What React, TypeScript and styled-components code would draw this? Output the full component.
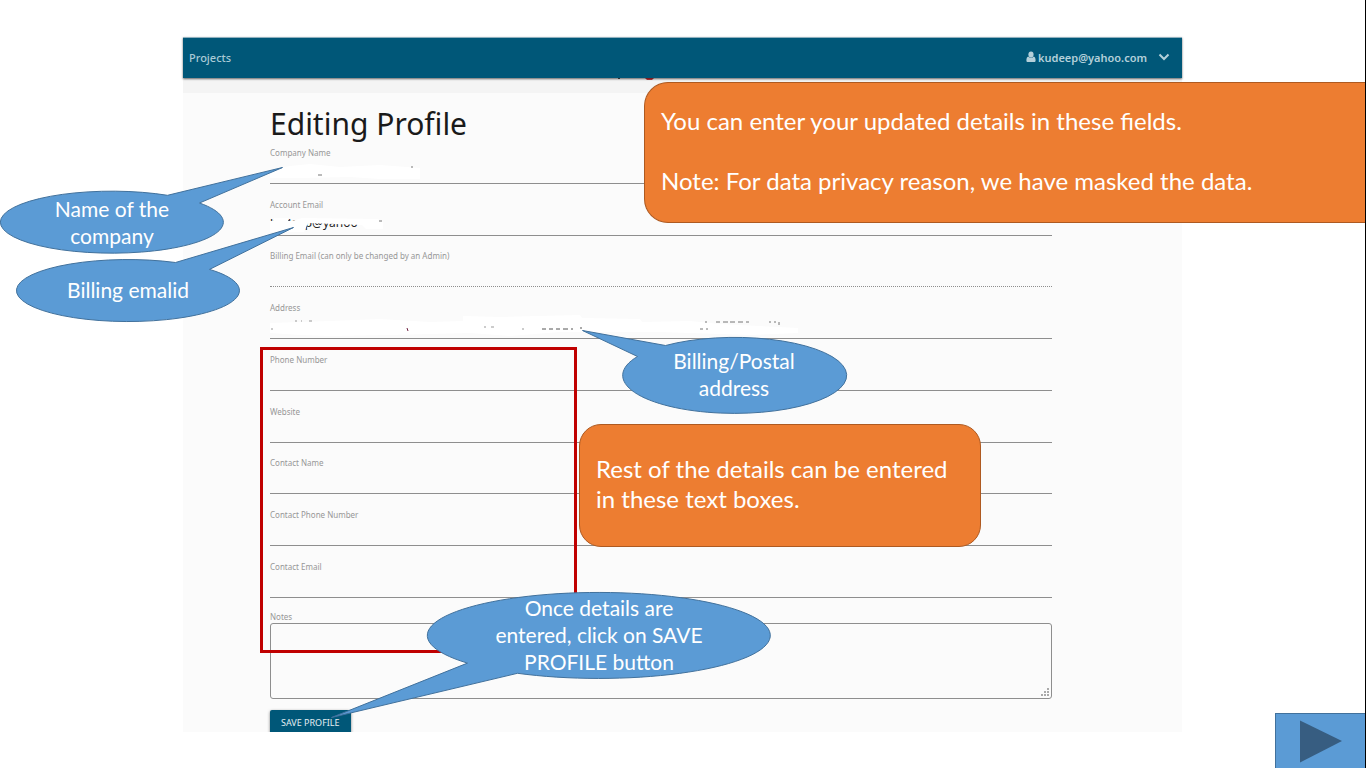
import React from "react";
import styled, { createGlobalStyle } from "styled-components";

const uiFont = `"Noto Sans", "Open Sans", sans-serif`;
const noteFont = `Lato, "Open Sans", sans-serif`;

const GlobalStyle = createGlobalStyle`
  *, *::before, *::after { box-sizing: border-box; }
  body { margin: 0; background: #fff; font-family: ${uiFont}; }
`;

const Slide = styled.div`
  position: relative;
  min-height: 100vh;
  padding: 37px 183px 36px;
  border-right: 1px solid #000;
  overflow: hidden;
`;

const Page = styled.main`
  background: #fbfbfb;
`;

const TopBar = styled.nav`
  position: relative;
  display: flex;
  align-items: center;
  justify-content: space-between;
  height: 41px;
  padding: 0 12px 2px 6px;
  background: #005778;
  border-top: 1px solid #8fb0be;
  box-shadow: 0 1px 2px rgba(0, 0, 0, 0.6);
  font-size: 11px;
  font-weight: 500;
`;

const NavLink = styled.a`
  color: #a9cad6;
  text-decoration: none;
`;

const AccountButton = styled.button`
  display: flex;
  align-items: center;
  gap: 2px;
  padding: 0;
  border: 0;
  background: none;
  color: #b4d0da;
  font: inherit;
  font-weight: 600;

  svg:last-child { margin-left: 9px; }
`;

const SubBar = styled.div`
  display: flex;
  justify-content: center;
  height: 15px;
  background: #f4f4f4;
`;

const Form = styled.form`
  display: flex;
  flex-direction: column;
  height: 639px;
  padding: 10px 130px 0 87px;
  overflow: hidden;
`;

const Title = styled.h1`
  margin: 0;
  color: #1a1a1a;
  font-size: 30px;
  font-weight: 400;
  line-height: 41px;
`;

const Fields = styled.div`
  display: grid;
  flex: none;
  grid-template-rows: repeat(9, 1fr);
  height: 466px;
  margin-top: -12px;
`;

const Field = styled.div`
  position: relative;
  display: flex;
  flex-direction: column;
  justify-content: flex-end;
`;

const Label = styled.label`
  color: #979797;
  font-size: 8px;
  line-height: 12px;
`;

const Input = styled.input<{ $dotted?: boolean }>`
  width: 100%;
  height: 25px;
  padding: 0;
  border: 0;
  border-bottom: 1px ${(p) => (p.$dotted ? "dotted" : "solid")} #8e8e8e;
  outline: 0;
  background: transparent;
  color: #222;
  font: 12px ${uiFont};
`;

const Mask = styled.svg`
  position: absolute;
  left: 0;
  bottom: 0;
  overflow: visible;
`;

const NotesField = styled.div`
  display: flex;
  flex: none;
  flex-direction: column;
  margin-top: 13px;
`;

const NotesBox = styled.div`
  position: relative;
  display: flex;
`;

const TextArea = styled.textarea`
  flex: 1;
  height: 76px;
  border: 1px solid #8e8e8e;
  border-radius: 3px;
  outline: 0;
  background: transparent;
  resize: none;
`;

const Grip = styled.svg`
  position: absolute;
  right: 3px;
  bottom: 2px;
`;

const SaveButton = styled.button`
  flex: none;
  align-self: flex-start;
  height: 27px;
  margin-top: 11px;
  padding: 0 11px 2px;
  border: 0;
  border-radius: 2px;
  background: #005778;
  box-shadow: 0 1px 3px rgba(0, 0, 0, 0.5);
  color: #e4eef2;
  font: 9px ${uiFont};
`;

const RedFrame = styled.div`
  position: absolute;
  left: 260px;
  top: 347px;
  width: 317px;
  height: 306px;
  border: 3px solid #c00000;
  pointer-events: none;
`;

const Note = styled.aside<{ $x: number; $y: number; $h: number; $w?: number }>`
  position: absolute;
  left: ${(p) => p.$x}px;
  top: ${(p) => p.$y}px;
  ${(p) => (p.$w ? `width: ${p.$w}px;` : "right: 0;")}
  height: ${(p) => p.$h}px;
  display: flex;
  flex-direction: column;
  justify-content: center;
  padding: 0 16px 4px;
  border: 1px solid #ae5a21;
  border-right-width: ${(p) => (p.$w ? 1 : 0)}px;
  border-radius: ${(p) => (p.$w ? "22px" : "24px 0 0 24px")};
  background: #ed7d31;
  color: #fff;
  font-family: ${noteFont};
  font-size: 24px;
  line-height: 30px;

  p { margin: 0; white-space: pre-line; }
`;

const Balloons = styled.svg`
  position: absolute;
  left: 0;
  top: 0;
  pointer-events: none;

  path { fill: #5b9bd5; stroke: #41719c; stroke-width: 1; }
`;

const BalloonText = styled.p<{ $x: number; $y: number; $w: number; $h: number }>`
  position: absolute;
  left: ${(p) => p.$x}px;
  top: ${(p) => p.$y}px;
  width: ${(p) => p.$w}px;
  height: ${(p) => p.$h}px;
  display: flex;
  align-items: center;
  justify-content: center;
  margin: 0;
  padding-bottom: 3px;
  color: #fff;
  font-family: ${noteFont};
  font-size: 21px;
  line-height: 27px;
  text-align: center;
  white-space: pre-line;
`;

const NextButton = styled.button`
  position: absolute;
  right: 0;
  bottom: 0;
  width: 90px;
  height: 55px;
  padding: 0;
  border: 1px solid #41719c;
  border-width: 1px 0 0 1px;
  background: #5b9bd5;

  svg { display: block; }
`;

const companyMask = (
  <Mask width="160" height="22" aria-hidden="true">
    <path d="M0 8 L20 4 L40 2 L70 5 L110 3 L150 6 V17 H110 L80 15 L30 16 L0 16Z" fill="#fff" />
    <path d="M48 13h4M141 5h2" stroke="#777" />
  </Mask>
);

const emailMask = (
  <Mask width="120" height="22" aria-hidden="true">
    <path d="M0 0H90V5H0Z" fill="#fbfbfb" />
    <path d="M0 7H4V4H18V7H22L32 4L108 5L113 8V15H96L92 11L38 9L34 18H0Z" fill="#fff" />
    <path d="M109 7h3" stroke="#777" />
  </Mask>
);

const addressMask = (
  <Mask width="530" height="26" aria-hidden="true">
    <path
      d="M0 10 L60 8 L110 6 L160 9 L193 8 V3 L230 4 L310 2 L312 5 L370 6 L372 9 L420 8 L450 11 L528 15 V20 L480 22 L390 19 L290 19 L240 23 L200 20 L120 22 L60 23 L30 22 L0 20Z"
      fill="#fff"
    />
    <path d="M25 8h2M31 8h1M39 8h3M1 16h2M214 14h2M221 14h3M252 16h2" stroke="#999" />
    <path d="M137 15l1 3" stroke="#702040" />
    <path d="M272 16h4M279 16h4M286 16h4M293 16h5M301 16h2M311 16v-2" stroke="#555" strokeWidth="1" />
    <path d="M435 9h2M446 9h4M453 9h5M460 9h5M468 9h5M476 9h3M499 9h2M504 9h2M509 9v3M430 16h3M436 16h2" stroke="#777" />
  </Mask>
);

interface FieldSpec {
  id: string;
  label: string;
  value?: string;
  dotted?: boolean;
  mask?: React.ReactNode;
}

const fields: FieldSpec[] = [
  { id: "company", label: "Company Name", mask: companyMask },
  { id: "email", label: "Account Email", value: "kudeep@yahoo", mask: emailMask },
  { id: "billing", label: "Billing Email (can only be changed by an Admin)", dotted: true },
  { id: "address", label: "Address", mask: addressMask },
  { id: "phone", label: "Phone Number" },
  { id: "website", label: "Website" },
  { id: "contact", label: "Contact Name" },
  { id: "contact-phone", label: "Contact Phone Number" },
  { id: "contact-email", label: "Contact Email" },
];

export default function App() {
  return (
    <Slide>
      <GlobalStyle />
      <Page>
        <TopBar>
          <NavLink href="#projects">Projects</NavLink>
          <AccountButton type="button">
            <svg width="10" height="12" viewBox="0 0 10 12" fill="currentColor" aria-hidden="true">
              <ellipse cx="5" cy="3.6" rx="2.6" ry="3" />
              <path d="M2.3 5.6C1 6 .4 7.500 .4 9.500C.4 10.600 1 11 1.800 11H8.200C9 11 9.600 10.600 9.600 9.500C9.600 7.500 9 6 7.700 5.600C6.500 7.200 3.500 7.200 2.300 5.600Z" />
            </svg>
            kudeep@yahoo.com
            <svg width="12" height="8" viewBox="0 0 12 8" fill="none" stroke="currentColor" strokeWidth="2" aria-hidden="true">
              <path d="M1.500 1.500L6 6L10.500 1.500" />
            </svg>
          </AccountButton>
        </TopBar>
        <SubBar>
          <svg width="200" height="4" aria-hidden="true">
            <path d="M36 0v1" stroke="#555" strokeWidth="2" />
            <path d="M62 0h9l-2 2h-5z" fill="#c9343c" />
          </svg>
        </SubBar>
        <Form>
          <Title>Editing Profile</Title>
          <Fields>
            {fields.map((f) => (
              <Field key={f.id}>
                <Label htmlFor={f.id}>{f.label}</Label>
                <Input id={f.id} defaultValue={f.value} $dotted={f.dotted} readOnly={f.dotted} />
                {f.mask}
              </Field>
            ))}
          </Fields>
          <NotesField>
            <Label htmlFor="notes">Notes</Label>
            <NotesBox>
              <TextArea id="notes" />
              <Grip width="9" height="9" fill="#aaa" aria-hidden="true">
                <path d="M7 0h2v2h-2zM7 3h2v2h-2zM4 3h2v2h-2zM7 6h2v2h-2zM4 6h2v2h-2zM1 6h2v2h-2z" />
              </Grip>
            </NotesBox>
          </NotesField>
          <SaveButton type="button">SAVE PROFILE</SaveButton>
        </Form>
      </Page>

      <RedFrame />
      <Note $x={644} $y={82} $h={141}>
        <p>{"You can enter your updated details in these fields.\n\nNote: For data privacy reason, we have masked the data."}</p>
      </Note>
      <Note $x={579} $y={424} $w={402} $h={123}>
        <p>{"Rest of the details can be entered\nin these text boxes."}</p>
      </Note>

      <Balloons width="860" height="730" aria-hidden="true">
        <path d="M167.500 195.300L282.500 167.500L199.500 203A111.500 31 0 1 1 167.500 195.300Z" />
        <path d="M175.500 262.500L293.500 227.500L209.500 269.400A111.500 31 0 1 1 175.500 262.500Z" />
        <path d="M637.500 356.500L582.500 330.500L665.500 345.500A112 38 0 1 1 637.500 356.500Z" />
        <path d="M467.500 663.100L331.500 717.500L517.500 673.300A171.500 43 0 1 0 467.500 663.100Z" />
      </Balloons>
      <BalloonText $x={0} $y={191} $w={224} $h={64}>{"Name of the\ncompany"}</BalloonText>
      <BalloonText $x={16} $y={260} $w={224} $h={62}>Billing emalid</BalloonText>
      <BalloonText $x={622} $y={337} $w={224} $h={77}>{"Billing/Postal\naddress"}</BalloonText>
      <BalloonText $x={427} $y={592} $w={344} $h={87}>{"Once details are\nentered, click on SAVE\nPROFILE button"}</BalloonText>

      <NextButton type="button" aria-label="Next">
        <svg width="89" height="54" aria-hidden="true">
          <path d="M24 6.500L66 27L24 48.500Z" fill="#375d81" />
        </svg>
      </NextButton>
    </Slide>
  );
}
